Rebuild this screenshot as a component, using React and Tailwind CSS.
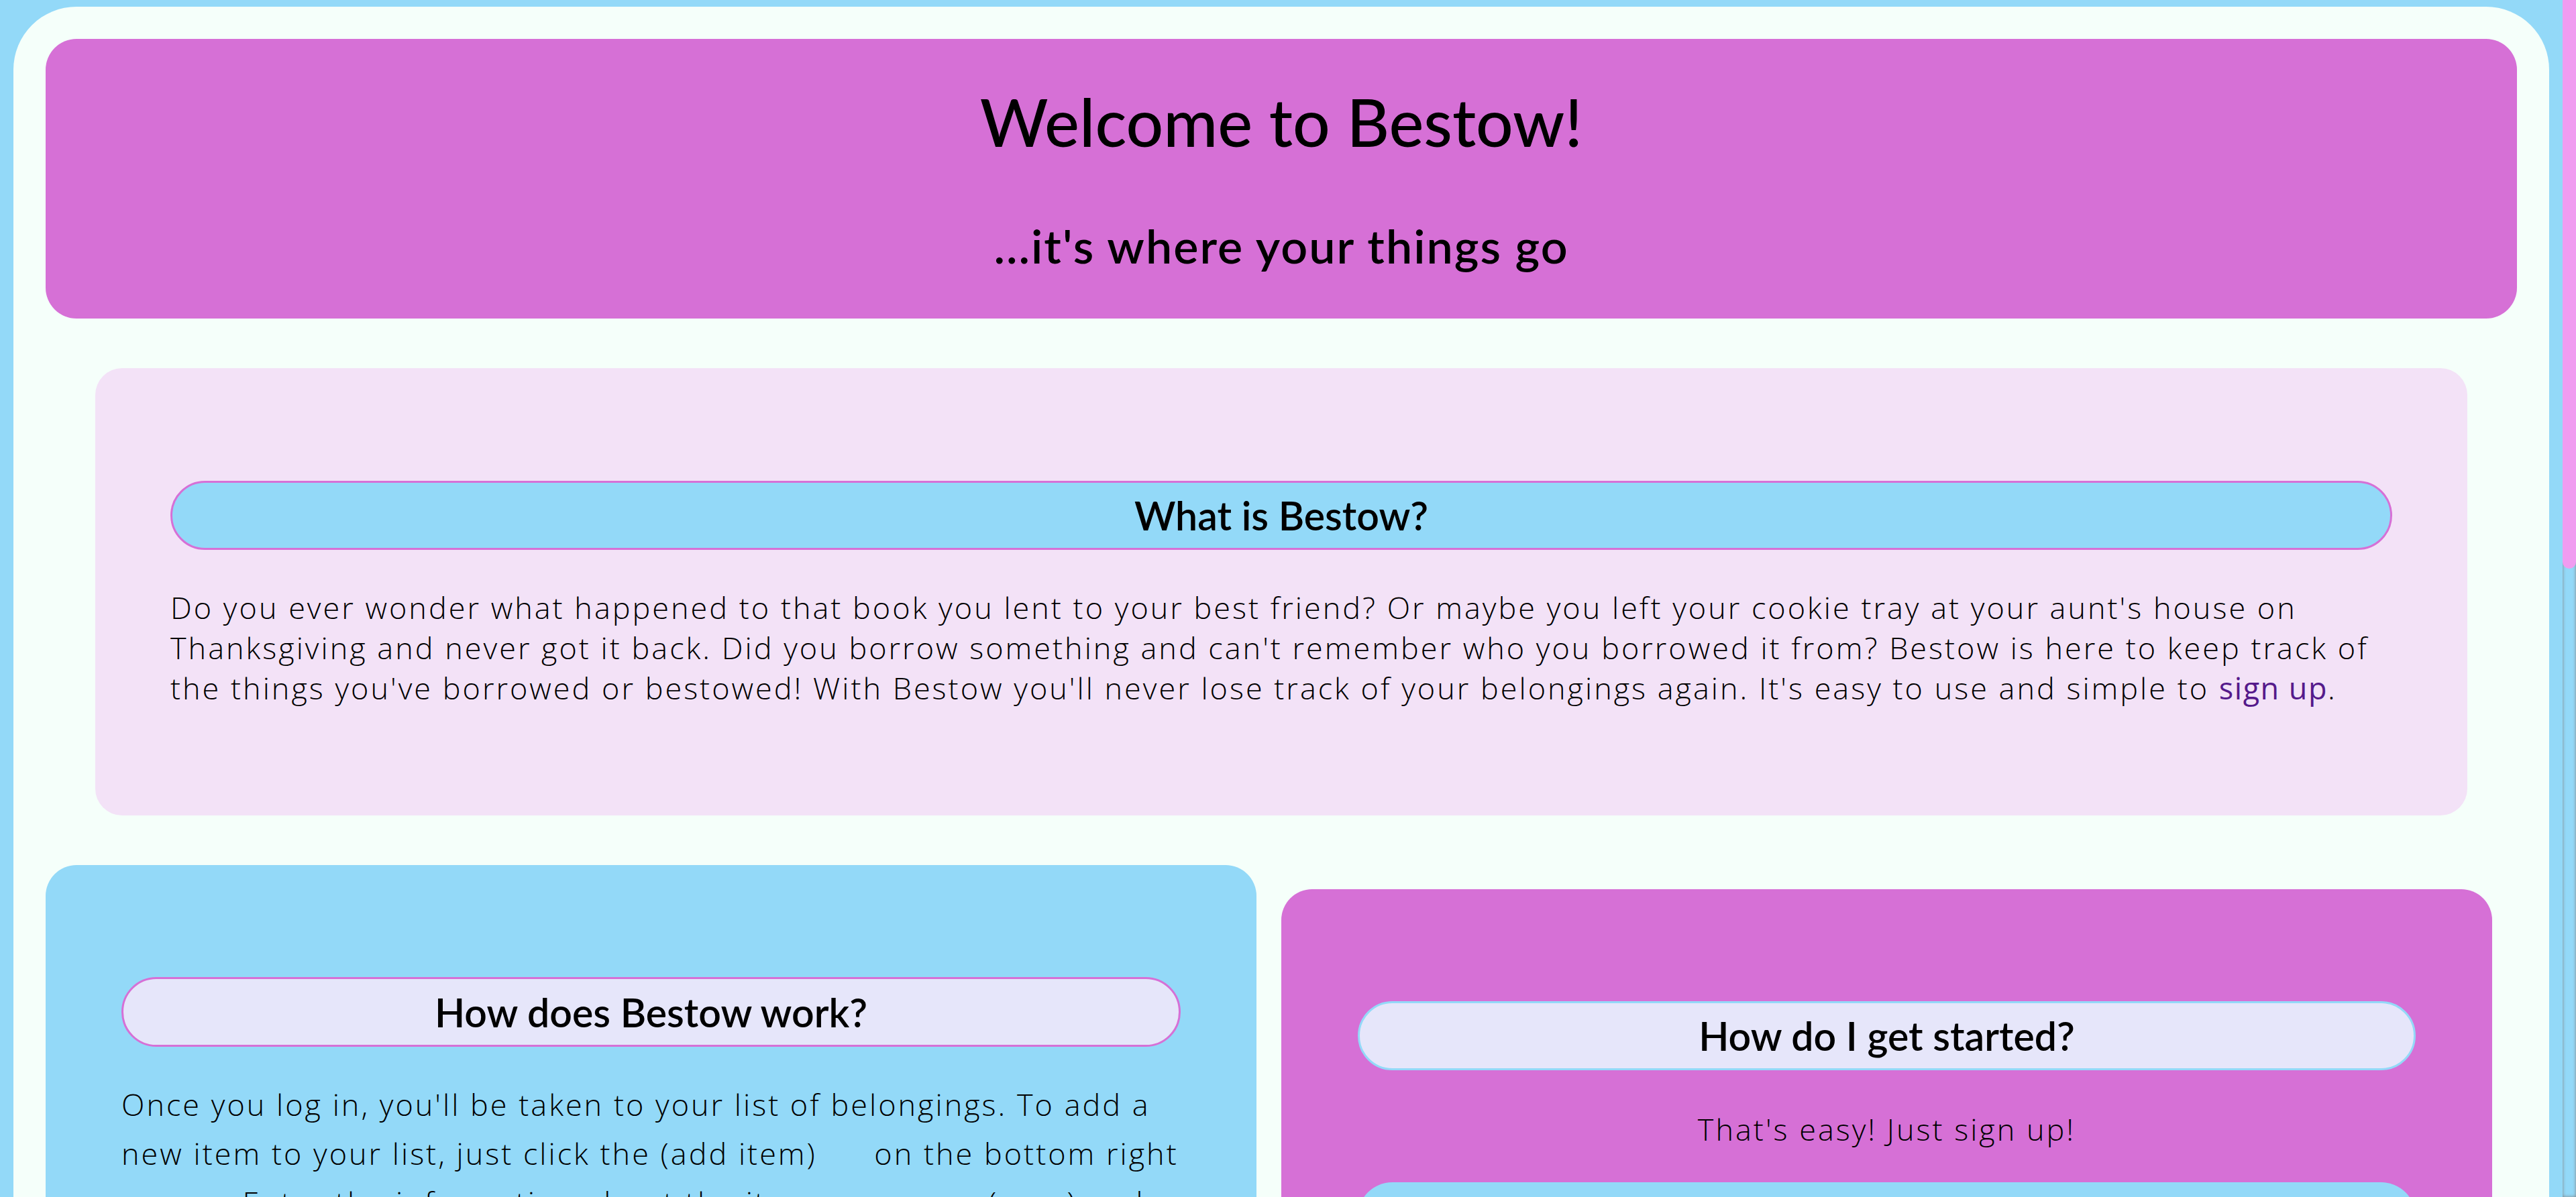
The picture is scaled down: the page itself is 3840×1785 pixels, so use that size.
import React from "react";

const HEAD = "font-['Lato',sans-serif]";
const BODY = "font-['Open_Sans',sans-serif] font-light tracking-[3px]";

function Pill({ children, fill, border, h }) {
  return (
    <div
      className={`flex ${h} items-center justify-center rounded-full border-[3px] ${fill} ${border}`}
    >
      <h3 className={`${HEAD} text-[59px] leading-none font-semibold text-black`}>{children}</h3>
    </div>
  );
}

export default function App() {
  return (
    <div className="flex h-[1785px] w-full overflow-hidden bg-[#93d9f8]">
      <div className="min-w-0 flex-1 px-[20px] pt-[10px]">
        <div className="rounded-[94px] bg-[#f5fffa] p-[48px]">
          <header className="flex h-[417px] flex-col items-center rounded-[46px] bg-[#d670d6] pt-[74px] text-black">
            <h1 className={`${HEAD} text-[98px] leading-[98px] font-medium`}>Welcome to Bestow!</h1>
            <h2 className={`${HEAD} mt-[101px] text-[70px] leading-[70px] font-semibold tracking-[2px]`}>
              ...it's where your things go
            </h2>
          </header>

          <section className="mx-[74px] mt-[74px] rounded-[40px] bg-[#f3e2f7] px-[112px] pt-[168px] pb-[160px]">
            <Pill fill="bg-[#93d9f8]" border="border-[#d670d6]" h="h-[103px]">
              What is Bestow?
            </Pill>
            <p className={`${BODY} mt-[56px] whitespace-nowrap text-[45px] leading-[60px] text-black`}>
              Do you ever wonder what happened to that book you lent to your best friend? Or maybe you left your cookie tray at your aunt's house on
              <br />
              Thanksgiving and never got it back. Did you borrow something and can't remember who you borrowed it from? Bestow is here to keep track of
              <br />
              the things you've borrowed or bestowed! With Bestow you'll never lose track of your belongings again. It's easy to use and simple to{" "}
              <a href="#" className="font-normal tracking-[1.5px] text-[#551a8b]">sign up</a>.
            </p>
          </section>

          <div className="mt-[74px] flex items-start gap-[37px]">
            <section className="w-[1805px] shrink-0 rounded-[46px] bg-[#93d9f8] px-[113px] pt-[167px] pb-[120px]">
              <Pill fill="bg-[#e6e6fa]" border="border-[#d670d6]" h="h-[104px]">
                How does Bestow work?
              </Pill>
              <p className={`${BODY} mt-[49px] whitespace-nowrap text-[45px] leading-[73px] text-black`}>
                Once you log in, you'll be taken to your list of belongings. To add a
                <br />
                new item to your list, just click the (add item){" "}
                <span className="inline-block w-[56px]" aria-hidden="true"></span>{" "}
                on the bottom right
                <br />
                corner. Enter the information about the item{" "}
                <span className="inline-block w-[230px]" aria-hidden="true"></span>{" "}
                (save) and
                <br />
                you're all set! You can edit or delete an item at any time.
              </p>
            </section>

            <section className="mt-[36px] w-[1805px] shrink-0 rounded-[46px] bg-[#d670d6] px-[114px] pt-[167px] pb-[120px]">
              <Pill fill="bg-[#e6e6fa]" border="border-[#93d9f8]" h="h-[103px]">
                How do I get started?
              </Pill>
              <p className={`${BODY} mt-[51px] text-center text-[45px] leading-[73px] text-black`}>
                That's easy! Just sign up!
              </p>
              <a
                href="#"
                className={`${HEAD} mt-[43px] flex h-[103px] items-center justify-center rounded-full bg-[#93d9f8] text-[56px] font-semibold text-black`}
              >
                Sign Up
              </a>
            </section>
          </div>
        </div>
      </div>
      <div className="flex w-[20px] shrink-0 flex-col bg-[#93d9f8] shadow-[inset_0_0_5px_grey]">
        <div className="h-[848px] w-full rounded-b-[10px] bg-[#f09cf0]"></div>
      </div>
    </div>
  );
}
